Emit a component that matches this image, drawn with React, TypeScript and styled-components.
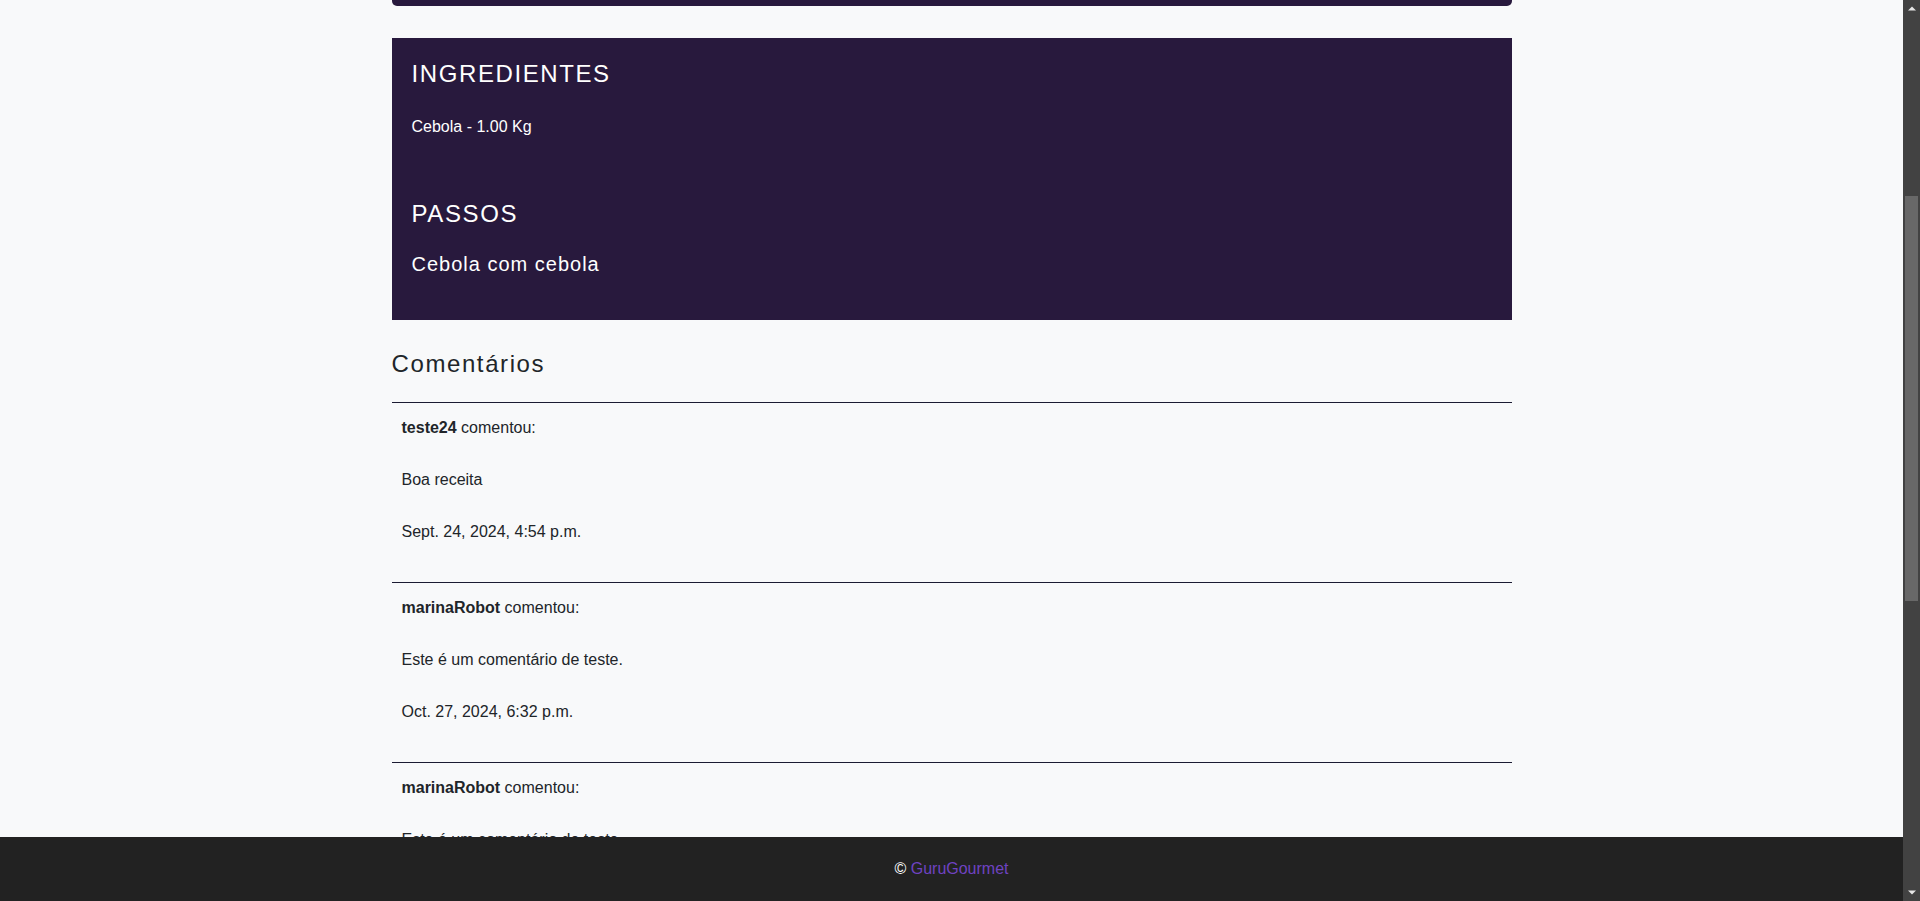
import React, { useLayoutEffect, useRef, useState } from "react";
import styled, { createGlobalStyle } from "styled-components";

const GlobalStyle = createGlobalStyle`
  html, body {
    margin: 0;
    height: 100%;
    overflow: hidden;
    background: #f8f9fa;
  }
  body {
    color: #212529;
    font-family: "Liberation Sans", Arial, Helvetica, sans-serif;
  }
  #root { height: 100%; }
  * { box-sizing: border-box; }
`;

const Shell = styled.div`
  display: flex;
  height: 100vh;
  overflow: hidden;
`;

const Viewport = styled.div`
  flex: 1;
  min-width: 0;
  overflow-y: auto;
  scrollbar-width: none;
  &::-webkit-scrollbar { display: none; }
`;

const Page = styled.main`
  max-width: 1120px;
  margin: 0 auto;
  padding: 24px 0 49px;
`;

const RecipeHeader = styled.section`
  height: 380px;
  background: #28193d;
  border-radius: 5px;
  color: #ffffff;
  padding: 24px 20px;
  margin-bottom: 32px;
`;

const RecipeTitle = styled.h1`
  margin: 0;
  font-size: 32px;
  font-weight: 400;
  letter-spacing: 2px;
`;

const DetailsPanel = styled.section`
  background: #28193d;
  color: #ffffff;
  padding: 22px 20px 44px;
  display: flex;
  flex-direction: column;
`;

const SectionTitle = styled.h2<{ $gap?: number }>`
  margin: ${(p) => p.$gap ?? 0}px 0 0;
  font-size: 24px;
  line-height: 28px;
  font-weight: 400;
  letter-spacing: 1.6px;
  text-transform: uppercase;
`;

const IngredientList = styled.ul`
  list-style: none;
  margin: 30px 0 0;
  padding: 0;
`;

const Ingredient = styled.li`
  font-size: 16px;
  line-height: 18px;
`;

const StepText = styled.p`
  margin: 25px 0 0;
  font-size: 20px;
  line-height: 23px;
  letter-spacing: 1px;
`;

const CommentsTitle = styled.h3`
  margin: 30px 0 24px;
  font-size: 24px;
  line-height: 28px;
  font-weight: 400;
  letter-spacing: 1.6px;
  color: #212529;
`;

const CommentList = styled.div`
  display: flex;
  flex-direction: column;
`;

const CommentItem = styled.article`
  border-top: 1px solid #1b1b32;
  padding: 13px 10px 38px;
  display: flex;
  flex-direction: column;
  gap: 28px;
  font-size: 16px;
  line-height: 24px;
  color: #212529;
`;

const Line = styled.p`
  margin: 0;
`;

const Author = styled.strong`
  font-weight: 700;
`;

const Footer = styled.footer`
  position: fixed;
  left: 0;
  right: 17px;
  bottom: 0;
  height: 64px;
  background: #222222;
  color: #ffffff;
  display: flex;
  align-items: center;
  justify-content: center;
  font-size: 16px;
`;

const FooterLink = styled.a`
  color: #6f42c1;
  text-decoration: none;
`;

const ScrollRail = styled.div`
  width: 17px;
  flex: 0 0 17px;
  background: #424242;
  display: flex;
  flex-direction: column;
`;

const RailButton = styled.div`
  height: 17px;
  flex: 0 0 17px;
  display: flex;
  align-items: center;
  justify-content: center;
`;

const RailTrack = styled.div`
  flex: 1;
  position: relative;
`;

const Thumb = styled.div`
  position: absolute;
  left: 2px;
  right: 2px;
  background: #686868;
`;

type Comment = { author: string; text: string; date: string };

const comments: Comment[] = [
  { author: "teste24", text: "Boa receita", date: "Sept. 24, 2024, 4:54 p.m." },
  ...Array.from({ length: 5 }, () => ({
    author: "marinaRobot",
    text: "Este é um comentário de teste.",
    date: "Oct. 27, 2024, 6:32 p.m.",
  })),
];

const TRACK = 867;

export default function App() {
  const viewRef = useRef<HTMLDivElement>(null);
  const [thumb, setThumb] = useState({ top: 179, height: 405 });

  const measure = () => {
    const el = viewRef.current;
    if (!el) return;
    const h = Math.max(20, (el.clientHeight / el.scrollHeight) * TRACK);
    const top = (el.scrollTop / el.scrollHeight) * TRACK;
    setThumb({ top, height: h });
  };

  useLayoutEffect(() => {
    const el = viewRef.current;
    if (el) el.scrollTop = 398;
    measure();
  }, []);

  return (
    <>
      <GlobalStyle />
      <Shell>
        <Viewport ref={viewRef} onScroll={measure}>
          <Page>
            <RecipeHeader>
              <RecipeTitle>Cebola</RecipeTitle>
            </RecipeHeader>

            <DetailsPanel>
              <SectionTitle>Ingredientes</SectionTitle>
              <IngredientList>
                <Ingredient>Cebola - 1.00 Kg</Ingredient>
              </IngredientList>
              <SectionTitle $gap={64}>Passos</SectionTitle>
              <StepText>Cebola com cebola</StepText>
            </DetailsPanel>

            <CommentsTitle>Comentários</CommentsTitle>
            <CommentList>
              {comments.map((c, i) => (
                <CommentItem key={i}>
                  <Line>
                    <Author>{c.author}</Author> comentou:
                  </Line>
                  <Line>{c.text}</Line>
                  <Line>{c.date}</Line>
                </CommentItem>
              ))}
            </CommentList>
          </Page>
        </Viewport>

        <ScrollRail>
          <RailButton>
            <svg width="8" height="5" viewBox="0 0 8 5">
              <path d="M0 4.5 L4 0.5 L8 4.5 Z" fill="#e6e6e6" />
            </svg>
          </RailButton>
          <RailTrack>
            <Thumb style={{ top: thumb.top, height: thumb.height }} />
          </RailTrack>
          <RailButton>
            <svg width="8" height="5" viewBox="0 0 8 5">
              <path d="M0 0.5 L4 4.5 L8 0.5 Z" fill="#e6e6e6" />
            </svg>
          </RailButton>
        </ScrollRail>

        <Footer>
          <span>
            ©&nbsp;<FooterLink href="#">GuruGourmet</FooterLink>
          </span>
        </Footer>
      </Shell>
    </>
  );
}
